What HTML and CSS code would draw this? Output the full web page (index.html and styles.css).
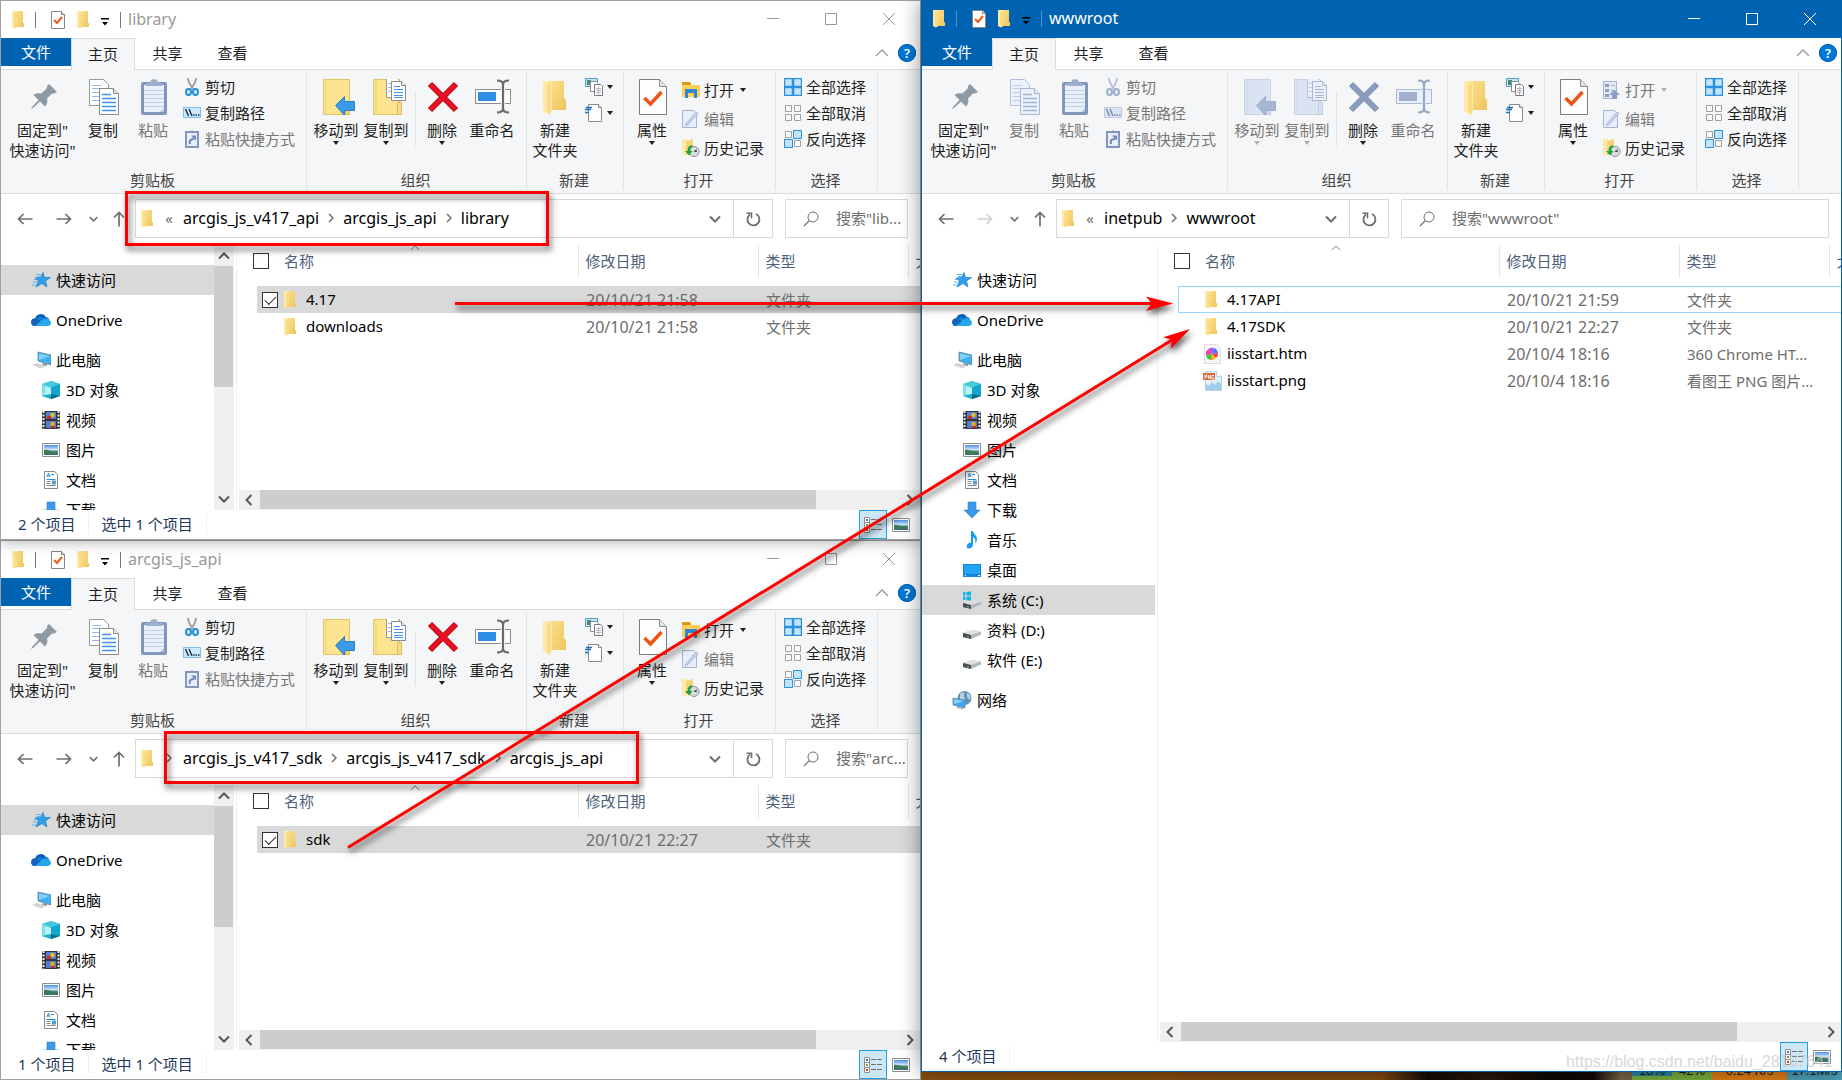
FILE: index.html
```html
<!DOCTYPE html>
<html lang="zh-CN">
<head>
<meta charset="utf-8">
<title>wwwroot</title>
<link rel="stylesheet" href="styles.css">
</head>
<body>
<svg class="sprite" aria-hidden="true">
  <defs>
    <filter id="disabled-tint" color-interpolation-filters="sRGB">
      <feColorMatrix type="matrix" values=".167 .329 .064 0 .358  .147 .288 .056 0 .454  .106 .207 .04 0 .633  0 0 0 1 0"/>
    </filter>
    <linearGradient id="g-folder" x1="0" y1="0" x2="1" y2="1"><stop offset="0" stop-color="#fbe08f"/><stop offset="1" stop-color="#efc55c"/></linearGradient>
    <linearGradient id="g-sky" x1="0" y1="0" x2="0" y2="1"><stop offset="0" stop-color="#4f8fe8"/><stop offset=".5" stop-color="#d5ecfb"/><stop offset=".6" stop-color="#4f8a72"/><stop offset="1" stop-color="#3a6a8c"/></linearGradient>
  </defs>

  <symbol id="folder" viewBox="0 0 20 20"><path d="M6 1h7v12h1v4H6z" fill="url(#g-folder)"/><path d="M2 1h4l1 1v15l-2 1.500-3-1.500z" fill="#ffe9a8"/><path d="M4 17V3l3-1v15l-2 1.500z" fill="#fbdc86"/></symbol>
  <symbol id="check-doc" viewBox="0 0 20 20"><path d="M3.500 1.500h10l3 3v14h-13z" fill="#fff" stroke="#858585"/><path d="M13.500 1.500v3h3" fill="#e4e4e4" stroke="#858585"/><path d="M6 10l3 3 5-6" fill="none" stroke="#f05a1a" stroke-width="2"/></symbol>
  <symbol id="qat-arrow" viewBox="0 0 8 8"><path class="qat-line" d="M0 0h8v1.500H0z" fill="currentColor"/><path d="M1 4h6L4 7.500z" fill="currentColor"/></symbol>
  <symbol id="caret" viewBox="0 0 8 4"><path d="M1 0h6L4 4z" fill="currentColor"/></symbol>
  <symbol id="min" viewBox="0 0 14 14"><path d="M1 6.500h12" stroke="currentColor"/></symbol>
  <symbol id="max" viewBox="0 0 14 14"><path d="M1.500 1.500h11v11h-11z" fill="none" stroke="currentColor"/></symbol>
  <symbol id="close" viewBox="0 0 14 14"><path d="M1 1l12 12M13 1L1 13" stroke="currentColor" fill="none"/></symbol>
  <symbol id="up-thin" viewBox="0 0 14 8"><path d="M1 7l6-6 6 6" fill="none" stroke="currentColor" stroke-width="1.300"/></symbol>
  <symbol id="chev-down" viewBox="0 0 12 8"><path d="M1 1.500l5 5 5-5" fill="none" stroke="currentColor" stroke-width="2"/></symbol>
  <symbol id="chev-up" viewBox="0 0 12 8"><path d="M1 6.500l5-5 5 5" fill="none" stroke="currentColor" stroke-width="2"/></symbol>
  <symbol id="chev-right" viewBox="0 0 8 12"><path d="M1.500 1l5 5-5 5" fill="none" stroke="currentColor" stroke-width="2"/></symbol>
  <symbol id="chev-left" viewBox="0 0 8 12"><path d="M6.500 1l-5 5 5 5" fill="none" stroke="currentColor" stroke-width="2"/></symbol>
  <symbol id="crumb" viewBox="0 0 6 10"><path d="M1 1l4 4-4 4" fill="none" stroke="currentColor" stroke-width="1.500"/></symbol>
  <symbol id="back" viewBox="0 0 16 12"><path d="M15.500 6H1.500M6.500 1l-5 5 5 5" fill="none" stroke="currentColor" stroke-width="1.700"/></symbol>
  <symbol id="forward" viewBox="0 0 16 12"><path d="M.5 6h14M9.500 1l5 5-5 5" fill="none" stroke="currentColor" stroke-width="1.700"/></symbol>
  <symbol id="up" viewBox="0 0 12 16"><path d="M6 15.500V1.500M1 6.500l5-5 5 5" fill="none" stroke="currentColor" stroke-width="1.700"/></symbol>
  <symbol id="refresh" viewBox="0 0 16 16"><path d="M5 3.500A6 6 0 1 0 11 3" fill="none" stroke="currentColor" stroke-width="1.800"/><path d="M1.500 2.200h5v5" fill="none" stroke="currentColor" stroke-width="1.600"/></symbol>
  <symbol id="search" viewBox="0 0 16 16"><circle cx="10" cy="6" r="5" fill="none" stroke="currentColor"/><path d="M6.500 9.500L.8 15.200" stroke="currentColor" stroke-width="1.200"/></symbol>

  <symbol id="pin" viewBox="0 0 40 36"><path d="M26 5l8 8-3 1.500h-2l-5 5c1 3 0 6-2 8l-5-5-7 6.500-2 1 1-2 6.500-7-5-5c2-2 5-2 8-1.500l5.500-5.500v-2z" fill="#8e9aa3"/></symbol>
  <symbol id="copy" viewBox="0 0 40 36"><path d="M6.500.5h14l5 5v21h-19z" fill="#fff" stroke="#9a9a9a"/><path d="M9 6.500h9M9 9.500h14M9 13.500h7M9 17.500h7M9 21.500h7" stroke="#8fb9f2"/><path d="M16.500 9.500h14l5 5v21h-19z" fill="#fff" stroke="#8a8a8a"/><path d="M30.500 9.500v5h5" fill="#e8e8e8" stroke="#8a8a8a"/><path d="M19 15.500h9M19 19.500h14M19 23.500h14M19 27.500h14M19 31.500h14" stroke="#3f94f5" stroke-width="1.500"/></symbol>
  <symbol id="paste" viewBox="0 0 40 36"><rect x="8" y="3" width="26" height="33" rx="2" fill="#8397bd"/><path d="M11 6h20v27H11z" fill="#eaf0fa"/><path d="M11 11.500h20M11 15.500h20M11 19.500h20M11 23.500h20M11 27.500h20" stroke="#c3d0e6"/><path d="M13 7V4h4l1-3c1-1 5-1 6 0l1 3h4v3z" fill="#9dafcf"/><path d="M27 33h4v-4z" fill="#b9c7e0"/></symbol>
  <symbol id="move-to" viewBox="0 0 40 36"><path d="M7.500.5h26v35h-26z" fill="#fde490" stroke="#e3c36a"/><path d="M10 1v34" stroke="#f0d07a"/><path d="M29.500 24h4v11.500h-4z" fill="#f7d375" stroke="#dfb95a"/><path d="M19.500 26.500l9-9v5h10v9h-10v5z" fill="#3c9be8" stroke="#2b80c8"/></symbol>
  <symbol id="copy-to" viewBox="0 0 40 36"><path d="M7.500.5h26v35h-26z" fill="#fde490" stroke="#e3c36a"/><path d="M10 1v34" stroke="#f0d07a"/><path d="M31.500 23.500h4v12h-4z" fill="#fbdc86" stroke="#dfb95a"/><path d="M20.500-1.500h10l4 4v16h-14z" fill="#fff" stroke="#9a9a9a"/><path d="M22 4.500h4M22 8.500h4M22 12.500h4" stroke="#8fb9f2"/><path d="M25.500 2.500h10l4 4v15h-14z" fill="#fff" stroke="#8a8a8a"/><path d="M35.500 2.500v4h4" fill="#eee" stroke="#8a8a8a"/><path d="M28 7.500h6M28 10.500h9M28 13.500h9M28 16.500h9M28 18.500h9" stroke="#3f94f5"/></symbol>
  <symbol id="delete" viewBox="0 0 40 36"><path d="M8 5l26 26M34 5L8 31" stroke="#b3000c" stroke-width="6"/><path d="M8.500 5.500l25 25M33.500 5.500l-25 25" stroke="#e81123" stroke-width="4.500"/></symbol>
  <symbol id="rename" viewBox="0 0 40 36"><path d="M3.500 10.500h35v14h-35z" fill="#fdfdfd" stroke="#8c8c8c"/><path d="M6 13h18v9H6z" fill="#2f8fe6"/><path d="M29 9h4v17h-4z" fill="#f5f6f7"/><path d="M25 1.500c4 0 6 1 6 4v24c0 3-2 4-6 4M37 1.500c-4 0-6 1-6 4v24c0 3 2 4 6 4" fill="none" stroke="#6b6b6b" stroke-width="2.200"/></symbol>
  <symbol id="new-folder" viewBox="0 0 40 36"><path d="M14 2h15v17l2 2v10H14z" fill="url(#g-folder)"/><path d="M8 2h6l3 3v27l-3 4-6-4z" fill="#ffe9a8"/><path d="M12 33V5l4-2v28l-1 5z" fill="#fbdc86"/></symbol>
  <symbol id="props" viewBox="0 0 40 36"><path d="M7.500.5h20l7 7v28h-27z" fill="#fdfdfd" stroke="#7d7d7d"/><path d="M27.500.5v7h7" fill="#e3e3e3" stroke="#8a8a8a"/><path d="M12.500 19l6 6 11-12" fill="none" stroke="#f05414" stroke-width="3.500"/></symbol>

  <symbol id="cut" viewBox="0 0 18 18"><path d="M5 0c0 4 2 7 5 11M13 0c0 4-2 7-5 11" fill="none" stroke="#9a9a9a" stroke-width="1.800"/><ellipse cx="5.500" cy="14" rx="2.500" ry="3" fill="none" stroke="#1e8fd8" stroke-width="2"/><ellipse cx="12.500" cy="14" rx="2.500" ry="3" fill="none" stroke="#1e8fd8" stroke-width="2"/></symbol>
  <symbol id="copy-path" viewBox="0 0 18 18"><path d="M.5 3.500h17v10H.5z" fill="#cdebfc" stroke="#7fbde8"/><path d="M2.500 5l3 7M6 5l3 7M10 11h1.500M12.500 11H14M15 11h1.500" stroke="#14304a" stroke-width="1.400"/></symbol>
  <symbol id="paste-link" viewBox="0 0 18 18"><path d="M3 2h12v15H3z" fill="#e8eefa" stroke="#8397bd" stroke-width="2"/><path d="M6 3V1h2l1-1 1 1h2v2z" fill="#8397bd"/><path d="M7 14c-1-3 0-5 4-5" fill="none" stroke="#6d85b3" stroke-width="2"/><path d="M8 5.500h5v5z" fill="#6d85b3"/></symbol>
  <symbol id="new-item" viewBox="0 0 18 18"><path d="M.5.500h12v8H.5z" fill="#c3e6f5" stroke="#5a9bc0"/><path d="M2 2h4v5H2z" fill="#4d8a78"/><path d="M5.500 3.500h6l2 2v8h-8z" fill="#fff" stroke="#8c8c8c"/><path d="M9.500 6.500h6l2 2v9h-8z" fill="#fff" stroke="#7a7a7a"/><path d="M11 10.500h5M11 12.500h5M11 14.500h5" stroke="#9db9e0"/><path d="M13.500 9v8" stroke="#e8a8a0"/></symbol>
  <symbol id="easy-access" viewBox="0 0 18 18"><path d="M3.500.5h10l3 3v14h-13z" fill="#fdfdfd" stroke="#8a8a8a"/><path d="M13.500.5v3h3" fill="#e8e8e8" stroke="#8a8a8a"/><path d="M1 3.500h6M0 5.500h6M-1 8.500h5" stroke="#1e6fb8" stroke-width="1.300"/></symbol>
  <symbol id="open" viewBox="0 0 18 18"><path d="M0 1h8l1 2v4H0z" fill="#d99a10"/><path d="M0 4h18v12H0z" fill="#fccf5a"/><path d="M3 17V8h12v9h-3v-5H6v5z" fill="#2f86d8"/></symbol>
  <symbol id="open-list" viewBox="0 0 18 18"><path d="M.5.500h13v17H.5z" fill="#e5ebf6" stroke="#a3b3d1"/><path d="M2 3h4v3H2zM2 8h4v3H2zM2 13h4v3H2z" fill="#8c9fc3"/><path d="M8 4.500h4M8 9.500h4" stroke="#a3b3d1"/><path d="M9 18v-4H6l5.500-5.500L17 14h-3v4z" fill="#8c9fc3"/></symbol>
  <symbol id="edit" viewBox="0 0 18 18"><path d="M.5.500h11l3 3v14H.5z" fill="#e8eefa" stroke="#a3b3d1"/><path d="M3 15L14 2l2 1.500L5 15.500z" fill="#cdd8ec" stroke="#a3b3d1"/></symbol>
  <symbol id="history" viewBox="0 0 18 18"><path d="M0 0h5v17H3l-3-2z" fill="#ffe9a8"/><path d="M4 2l7-2v15H4z" fill="#f7d375"/><circle cx="12" cy="12.500" r="5" fill="#d9dde0" stroke="#8b9297"/><path d="M12 12.500l3-2M12 12.500h3" stroke="#555"/><path d="M10 6c-4 1-5 4-4 6H3l4 4.500 3.500-4.500H8.500c-.5-2 0-3 1.500-4z" fill="#22a045"/></symbol>
  <symbol id="sel-all" viewBox="0 0 18 18"><path d="M.5.500h17v17H.5z" fill="#c2e4fb" stroke="#2b8fdd" stroke-width="1.400"/><path d="M9 0v18M0 9h18" stroke="#2b8fdd" stroke-width="2.500"/></symbol>
  <symbol id="sel-none" viewBox="0 0 18 18"><path d="M1.500 1.500h6v6h-6zM10.500 1.500h6v6h-6zM1.500 10.500h6v6h-6zM10.500 10.500h6v6h-6z" fill="#fafafa" stroke="#a0a0a0"/></symbol>
  <symbol id="sel-inv" viewBox="0 0 18 18"><path d="M1.500 1.500h6v6h-6zM10.500 10.500h6v6h-6z" fill="#fafafa" stroke="#a0a0a0"/><path d="M9.500.5h8v8h-8zM.5 9.500h8v8h-8z" fill="#c2e4fb" stroke="#2b8fdd"/></symbol>

  <symbol id="star" viewBox="0 0 20 20"><path d="M12 2.500l1.500 5 6 0-5 3.500 1.500 6-5-3.500-6 3.500 2.500-6L4 8l5.500-.5z" fill="#2f9fe8" stroke="#1a7fc8" stroke-width=".7"/><path d="M5 4.500h5M6 6.500h4M3 9.500h3M2 12h4M1 15h4" stroke="#5db9f0"/></symbol>
  <symbol id="onedrive" viewBox="0 0 20 20"><path d="M4 9a6 6 0 0 1 11-2l-3 5-10 4A4 4 0 0 1 4 9z" fill="#0a5cb8"/><path d="M12 8c3-2 6-1 6 2l-6 3-7-4c2-2 5-2 7-1z" fill="#1580d8"/><path d="M3 15.500C6 12 10 10 12 9.500c4-2 8 0 8 3.500 0 2-1.500 3-3.500 3h-12z" fill="#28a8ea"/><path d="M0 12c0-3 3-4.500 6-3.200L10 11l-6 5c-2 0-4-1.500-4-4z" fill="#1264c0"/></symbol>
  <symbol id="pc" viewBox="0 0 20 20"><path d="M7 2l13 3v10L7 11z" fill="#3fb0f0" stroke="#6b8296" stroke-width=".8"/><path d="M8 3.500l11 2.500-11 4z" fill="#7fd0fa"/><path d="M12 13l4 1v2l-5-1z" fill="#8a949c"/><path d="M1 15l5-2 9 3-5 2.500z" fill="#d0d5da"/></symbol>
  <symbol id="cube" viewBox="0 0 18 18"><path d="M0 3l9-3v18l-9-3z" fill="#7fe0ea"/><path d="M9 0l9 3v12l-9 3z" fill="#12a5cf"/><path d="M0 3l9-3 9 3-9 3.500z" fill="#45c8d8"/><path d="M3 5.500l6 1.500V14l-6-1z" fill="#b8f2f6"/><path d="M0 15l9-2 9 2-9 3z" fill="#1cb0c4"/><path d="M9 13l9 2-9 3z" fill="#0a6c84"/></symbol>
  <symbol id="video" viewBox="0 0 18 18"><path d="M0 0h18v18H0z" fill="#343434"/><path d="M1.500 0v18M16.500 0v18" stroke="#f0f0f0" stroke-width="2" stroke-dasharray="2 1.500"/><path d="M4 1h10v7H4zM4 10h10v7H4z" fill="#4f7fd8"/><circle cx="10.500" cy="4" r="2.300" fill="#e8c020"/><path d="M5 5h4v3H5z" fill="#c83020"/><circle cx="10.500" cy="13" r="2.300" fill="#e8a820"/><path d="M9 15h4v2H9z" fill="#c83020"/></symbol>
  <symbol id="picture" viewBox="0 0 18 18"><path d="M.5 2.500h17v13H.5z" fill="#fff" stroke="#8c8c8c"/><path d="M2 4h14v10H2z" fill="url(#g-sky)"/><path d="M2 9c4-1 8 2 14 3v1H2z" fill="#3f7a58"/></symbol>
  <symbol id="doc" viewBox="0 0 18 18"><path d="M2.500.5h10l3 3v14h-13z" fill="#fff" stroke="#8a8a8a"/><path d="M5 6l1.500-4L8 6M5.500 5h2M9 3.500h3M4.500 8.500h9" stroke="#2a8fd0" fill="none"/><path d="M10 9.500h4v4h-4z" fill="#4f9fd8"/><path d="M4.500 10.500h4M4.500 12.500h4M4.500 14.500h9" stroke="#8a8a8a"/></symbol>
  <symbol id="download" viewBox="0 0 18 18"><path d="M5 1h8v8h4l-8 8-8-8h4z" fill="#3c98e8" stroke="#2b7fc8" stroke-width=".6"/></symbol>
  <symbol id="music" viewBox="0 0 18 18"><path d="M8 0h2c0 3 4 4 4 8 0 2-1 4-2 4 1-3 0-5-2-6v7c0 3-2 4.500-4 4.500S3 16 4 14s3-2.500 4-2z" fill="#159bf0"/></symbol>
  <symbol id="desk" viewBox="0 0 18 18"><path d="M0 3h18v13H0z" fill="#1487dd"/><path d="M1 4h16v9H1z" fill="#25a3f5"/><path d="M2 14.500h1M15 14.500h2" stroke="#fff"/></symbol>
  <symbol id="drive" viewBox="0 0 18 18"><path d="M0 12l9-3 9 1.500v3L8 18l-8-2z" fill="#b5b8bb"/><path d="M0 12l9-3 9 1.500L8 14z" fill="#dfe1e3"/><path d="M0 12l8 2v4l-8-2z" fill="#4a4d50"/><path d="M4 15.500l2 .5" stroke="#6fd06f"/></symbol>
  <symbol id="drive-c" viewBox="0 0 18 18"><use href="#drive"/><path d="M-1 1.500L2.500 1v3.500H-1zM3.500 1L8 .2v4.300H3.500zM-1 5.500h3.500V9L-1 8.500zM3.500 5.500H8v4.300L3.500 9z" fill="#10b4e8"/></symbol>
  <symbol id="network" viewBox="0 0 20 20"><circle cx="12.500" cy="8" r="7" fill="#5f94b8"/><path d="M8 4c3-3 5-1 4 1s2 3 1 5-5 1-5-1zM15 3c3 1 4 4 3 7l-3-3z" fill="#b5d4e4"/><path d="M1 8l12 2v8L1 15z" fill="#3fa8ef" stroke="#5a7f9c" stroke-width=".7"/><path d="M2 9l10 2-10 3z" fill="#85d0fa"/><path d="M5 17l6 1v1l-6-1z" fill="#8a949c"/></symbol>
  <symbol id="htm" viewBox="0 0 20 20"><path d="M1.500.5h12l4 4v15h-16z" fill="#f6f6f6" stroke="#dcdcdc"/><path d="M9 10L5.500 5A6 6 0 0 1 11 4z" fill="#b34ff0"/><path d="M9 10l2-6a6 6 0 0 1 4 5z" fill="#4f74f5"/><path d="M9 10l6-1a6 6 0 0 1-2 5z" fill="#ff3b3b"/><path d="M9 10l4 4a6 6 0 0 1-5 2z" fill="#ffb01a"/><path d="M9 10l-1 6a6 6 0 0 1-5-5z" fill="#35c63b"/><path d="M9 10l-6 1a6 6 0 0 1 2.500-6z" fill="#e83fa8"/></symbol>
  <symbol id="png" viewBox="0 0 20 20"><path d="M2.500.5h11l5 5v14h-16z" fill="#dff0fa" stroke="#b5d3e6"/><path d="M13.500.5v5h5" fill="#fff" stroke="#b5d3e6"/><path d="M3 19v-6l3 2 3-4 3 3 3-4 3 3v6z" fill="#9fcdea"/><path d="M0 2h12v7H0z" fill="#e0653a"/><path d="M2 8V4h2v2H2M5.500 8V4l2 4V4M11 4.500H9V8h2V6.500" stroke="#fff" fill="none" stroke-width=".8"/></symbol>
  <symbol id="view-list" viewBox="0 0 18 18"><path d="M.5 1.500h5v15h-5zM.5 6.500h5M.5 11.500h5" fill="#fff" stroke="#8c8c8c"/><path d="M2 3h2v2H2z" fill="#3f7fa0"/><path d="M2 8h2v2H2z" fill="#8a9a3f"/><path d="M2 13h2v2H2z" fill="#c84020"/><path d="M7 3.500h5M13 3.500h5M7 8.500h5M13 8.500h5M7 13.500h5M13 13.500h5" stroke="#6f6f6f"/></symbol>
</svg>

<main class="desktop">

  <section class="window window-a">
    <header class="titlebar">
      <svg class="i20"><use href="#folder"/></svg><span class="bar"></span>
      <svg class="i20 qat-doc"><use href="#check-doc"/></svg><svg class="i20 qat-folder"><use href="#folder"/></svg><svg class="qat"><use href="#qat-arrow"/></svg><span class="bar"></span>
      <h1>library</h1>
      <div class="controls"><button aria-label="最小化"><svg><use href="#min"/></svg></button><button aria-label="最大化"><svg><use href="#max"/></svg></button><button aria-label="关闭"><svg><use href="#close"/></svg></button></div>
    </header>
    <nav class="tabs"><button class="tab file">文件</button><button class="tab active">主页</button><button class="tab">共享</button><button class="tab">查看</button><span class="tab-tools"><svg class="thin"><use href="#up-thin"/></svg><button class="help" aria-label="帮助">?</button></span></nav>
    <div class="ribbon">
      <div class="group g-clip"><div class="tools">
        <button class="big pin"><svg><use href="#pin"/></svg><span>固定到"<br>快速访问"</span></button>
        <button class="big"><svg><use href="#copy"/></svg><span>复制</span></button>
        <button class="big" disabled><svg class="plain"><use href="#paste"/></svg><span>粘贴</span></button>
        <div class="stack"><button class="small"><svg><use href="#cut"/></svg>剪切</button><button class="small"><svg><use href="#copy-path"/></svg>复制路径</button><button class="small" disabled><svg class="plain"><use href="#paste-link"/></svg>粘贴快捷方式</button></div>
      </div><div class="caption">剪贴板</div></div>
      <div class="group g-org"><div class="tools">
        <button class="big"><svg><use href="#move-to"/></svg><span>移动到</span><svg class="caret"><use href="#caret"/></svg></button>
        <button class="big"><svg><use href="#copy-to"/></svg><span>复制到</span><svg class="caret"><use href="#caret"/></svg></button>
        <span class="split"></span>
        <button class="big"><svg><use href="#delete"/></svg><span>删除</span><svg class="caret"><use href="#caret"/></svg></button>
        <button class="big"><svg><use href="#rename"/></svg><span>重命名</span></button>
      </div><div class="caption">组织</div></div>
      <div class="group g-new"><div class="tools">
        <button class="big"><svg><use href="#new-folder"/></svg><span>新建<br>文件夹</span></button>
        <div class="stack"><button class="small" aria-label="新建项目"><svg><use href="#new-item"/></svg><svg class="caret"><use href="#caret"/></svg></button><button class="small" aria-label="轻松访问"><svg><use href="#easy-access"/></svg><svg class="caret"><use href="#caret"/></svg></button></div>
      </div><div class="caption">新建</div></div>
      <div class="group g-open"><div class="tools">
        <button class="big"><svg><use href="#props"/></svg><span>属性</span><svg class="caret"><use href="#caret"/></svg></button>
        <div class="stack loose"><button class="small"><svg><use href="#open"/></svg>打开<svg class="caret"><use href="#caret"/></svg></button><button class="small" disabled><svg class="plain"><use href="#edit"/></svg>编辑</button><button class="small"><svg><use href="#history"/></svg>历史记录</button></div>
      </div><div class="caption">打开</div></div>
      <div class="group g-sel"><div class="tools">
        <div class="stack"><button class="small"><svg><use href="#sel-all"/></svg>全部选择</button><button class="small"><svg><use href="#sel-none"/></svg>全部取消</button><button class="small"><svg><use href="#sel-inv"/></svg>反向选择</button></div>
      </div><div class="caption">选择</div></div>
    </div>
    <div class="address-row">
      <button class="nb wide" aria-label="后退"><svg class="arrow-h"><use href="#back"/></svg></button><button class="nb wide" aria-label="前进"><svg class="arrow-h"><use href="#forward"/></svg></button><button class="nb recent" aria-label="最近"><svg class="chev-s"><use href="#chev-down"/></svg></button><button class="nb up" aria-label="向上"><svg class="arrow-v"><use href="#up"/></svg></button>
      <div class="address"><svg class="i20"><use href="#folder"/></svg><span class="lead">«</span><a href="#">arcgis_js_v417_api</a><span class="sep"><svg><use href="#crumb"/></svg></span><a href="#">arcgis_js_api</a><span class="sep"><svg><use href="#crumb"/></svg></span><a href="#">library</a><button class="drop" aria-label="历史"><svg class="chev"><use href="#chev-down"/></svg></button><button class="refresh" aria-label="刷新"><svg class="i16"><use href="#refresh"/></svg></button></div>
      <label class="search"><svg class="i16"><use href="#search"/></svg><input type="text" aria-label="搜索" placeholder='搜索"lib...'></label>
    </div>
    <div class="body">
      <aside class="tree"><ul>
        <li class="on"><a href="#"><svg class="i20"><use href="#star"/></svg>快速访问</a></li>
        <li class="top"><a href="#"><svg class="i20"><use href="#onedrive"/></svg>OneDrive</a></li>
        <li class="top"><a href="#"><svg class="i20"><use href="#pc"/></svg>此电脑</a></li>
        <li class="sub"><a href="#"><svg class="i18"><use href="#cube"/></svg>3D 对象</a></li>
        <li class="sub"><a href="#"><svg class="i18"><use href="#video"/></svg>视频</a></li>
        <li class="sub"><a href="#"><svg class="i18"><use href="#picture"/></svg>图片</a></li>
        <li class="sub"><a href="#"><svg class="i18"><use href="#doc"/></svg>文档</a></li>
        <li class="sub"><a href="#"><svg class="i18"><use href="#download"/></svg>下载</a></li>
      </ul></aside>
      <div class="vscroll"><svg class="chev"><use href="#chev-up"/></svg><span class="vthumb"></span><svg class="chev"><use href="#chev-down"/></svg></div>
      <div class="pane">
        <svg class="sort"><use href="#up-thin"/></svg>
        <table>
          <colgroup><col class="c-check"><col><col class="c-date"><col class="c-type"><col class="c-size"></colgroup>
          <thead><tr><th><input type="checkbox" aria-label="全选"></th><th class="h-name">名称</th><th>修改日期</th><th>类型</th><th>大小</th></tr></thead>
          <tbody>
            <tr class="selected"><td><input type="checkbox" aria-label="4.17" checked></td><td class="name"><svg class="i20"><use href="#folder"/></svg>4.17</td><td class="date">20/10/21 21:58</td><td>文件夹</td><td></td></tr>
            <tr><td></td><td class="name"><svg class="i20"><use href="#folder"/></svg>downloads</td><td class="date">20/10/21 21:58</td><td>文件夹</td><td></td></tr>
          </tbody>
        </table>
        <div class="hscroll"><svg class="chev-v"><use href="#chev-left"/></svg><span class="track"><span class="hthumb"></span></span><svg class="chev-v"><use href="#chev-right"/></svg></div>
      </div>
    </div>
    <footer class="status"><span>2 个项目</span><span>选中 1 个项目</span><div class="views"><button class="on" aria-label="详细信息"><svg class="i18"><use href="#view-list"/></svg></button><button aria-label="大图标"><svg class="i18"><use href="#picture"/></svg></button></div></footer>
  </section>

  <section class="window window-b">
    <header class="titlebar">
      <svg class="i20"><use href="#folder"/></svg><span class="bar"></span>
      <svg class="i20 qat-doc"><use href="#check-doc"/></svg><svg class="i20 qat-folder"><use href="#folder"/></svg><svg class="qat"><use href="#qat-arrow"/></svg><span class="bar"></span>
      <h1>arcgis_js_api</h1>
      <div class="controls"><button aria-label="最小化"><svg><use href="#min"/></svg></button><button aria-label="最大化"><svg><use href="#max"/></svg></button><button aria-label="关闭"><svg><use href="#close"/></svg></button></div>
    </header>
    <nav class="tabs"><button class="tab file">文件</button><button class="tab active">主页</button><button class="tab">共享</button><button class="tab">查看</button><span class="tab-tools"><svg class="thin"><use href="#up-thin"/></svg><button class="help" aria-label="帮助">?</button></span></nav>
    <div class="ribbon">
      <div class="group g-clip"><div class="tools">
        <button class="big pin"><svg><use href="#pin"/></svg><span>固定到"<br>快速访问"</span></button>
        <button class="big"><svg><use href="#copy"/></svg><span>复制</span></button>
        <button class="big" disabled><svg class="plain"><use href="#paste"/></svg><span>粘贴</span></button>
        <div class="stack"><button class="small"><svg><use href="#cut"/></svg>剪切</button><button class="small"><svg><use href="#copy-path"/></svg>复制路径</button><button class="small" disabled><svg class="plain"><use href="#paste-link"/></svg>粘贴快捷方式</button></div>
      </div><div class="caption">剪贴板</div></div>
      <div class="group g-org"><div class="tools">
        <button class="big"><svg><use href="#move-to"/></svg><span>移动到</span><svg class="caret"><use href="#caret"/></svg></button>
        <button class="big"><svg><use href="#copy-to"/></svg><span>复制到</span><svg class="caret"><use href="#caret"/></svg></button>
        <span class="split"></span>
        <button class="big"><svg><use href="#delete"/></svg><span>删除</span><svg class="caret"><use href="#caret"/></svg></button>
        <button class="big"><svg><use href="#rename"/></svg><span>重命名</span></button>
      </div><div class="caption">组织</div></div>
      <div class="group g-new"><div class="tools">
        <button class="big"><svg><use href="#new-folder"/></svg><span>新建<br>文件夹</span></button>
        <div class="stack"><button class="small" aria-label="新建项目"><svg><use href="#new-item"/></svg><svg class="caret"><use href="#caret"/></svg></button><button class="small" aria-label="轻松访问"><svg><use href="#easy-access"/></svg><svg class="caret"><use href="#caret"/></svg></button></div>
      </div><div class="caption">新建</div></div>
      <div class="group g-open"><div class="tools">
        <button class="big"><svg><use href="#props"/></svg><span>属性</span><svg class="caret"><use href="#caret"/></svg></button>
        <div class="stack loose"><button class="small"><svg><use href="#open"/></svg>打开<svg class="caret"><use href="#caret"/></svg></button><button class="small" disabled><svg class="plain"><use href="#edit"/></svg>编辑</button><button class="small"><svg><use href="#history"/></svg>历史记录</button></div>
      </div><div class="caption">打开</div></div>
      <div class="group g-sel"><div class="tools">
        <div class="stack"><button class="small"><svg><use href="#sel-all"/></svg>全部选择</button><button class="small"><svg><use href="#sel-none"/></svg>全部取消</button><button class="small"><svg><use href="#sel-inv"/></svg>反向选择</button></div>
      </div><div class="caption">选择</div></div>
    </div>
    <div class="address-row">
      <button class="nb wide" aria-label="后退"><svg class="arrow-h"><use href="#back"/></svg></button><button class="nb wide" aria-label="前进"><svg class="arrow-h"><use href="#forward"/></svg></button><button class="nb recent" aria-label="最近"><svg class="chev-s"><use href="#chev-down"/></svg></button><button class="nb up" aria-label="向上"><svg class="arrow-v"><use href="#up"/></svg></button>
      <div class="address"><svg class="i20"><use href="#folder"/></svg><span class="lead"><svg><use href="#crumb"/></svg></span><a href="#">arcgis_js_v417_sdk</a><span class="sep"><svg><use href="#crumb"/></svg></span><a href="#">arcgis_js_v417_sdk</a><span class="sep"><svg><use href="#crumb"/></svg></span><a href="#">arcgis_js_api</a><button class="drop" aria-label="历史"><svg class="chev"><use href="#chev-down"/></svg></button><button class="refresh" aria-label="刷新"><svg class="i16"><use href="#refresh"/></svg></button></div>
      <label class="search"><svg class="i16"><use href="#search"/></svg><input type="text" aria-label="搜索" placeholder='搜索"arc...'></label>
    </div>
    <div class="body">
      <aside class="tree"><ul>
        <li class="on"><a href="#"><svg class="i20"><use href="#star"/></svg>快速访问</a></li>
        <li class="top"><a href="#"><svg class="i20"><use href="#onedrive"/></svg>OneDrive</a></li>
        <li class="top"><a href="#"><svg class="i20"><use href="#pc"/></svg>此电脑</a></li>
        <li class="sub"><a href="#"><svg class="i18"><use href="#cube"/></svg>3D 对象</a></li>
        <li class="sub"><a href="#"><svg class="i18"><use href="#video"/></svg>视频</a></li>
        <li class="sub"><a href="#"><svg class="i18"><use href="#picture"/></svg>图片</a></li>
        <li class="sub"><a href="#"><svg class="i18"><use href="#doc"/></svg>文档</a></li>
        <li class="sub"><a href="#"><svg class="i18"><use href="#download"/></svg>下载</a></li>
      </ul></aside>
      <div class="vscroll"><svg class="chev"><use href="#chev-up"/></svg><span class="vthumb"></span><svg class="chev"><use href="#chev-down"/></svg></div>
      <div class="pane">
        <svg class="sort"><use href="#up-thin"/></svg>
        <table>
          <colgroup><col class="c-check"><col><col class="c-date"><col class="c-type"><col class="c-size"></colgroup>
          <thead><tr><th><input type="checkbox" aria-label="全选"></th><th class="h-name">名称</th><th>修改日期</th><th>类型</th><th>大小</th></tr></thead>
          <tbody>
            <tr class="selected"><td><input type="checkbox" aria-label="sdk" checked></td><td class="name"><svg class="i20"><use href="#folder"/></svg>sdk</td><td class="date">20/10/21 22:27</td><td>文件夹</td><td></td></tr>
          </tbody>
        </table>
        <div class="hscroll"><svg class="chev-v"><use href="#chev-left"/></svg><span class="track"><span class="hthumb"></span></span><svg class="chev-v"><use href="#chev-right"/></svg></div>
      </div>
    </div>
    <footer class="status"><span>1 个项目</span><span>选中 1 个项目</span><div class="views"><button class="on" aria-label="详细信息"><svg class="i18"><use href="#view-list"/></svg></button><button aria-label="大图标"><svg class="i18"><use href="#picture"/></svg></button></div></footer>
  </section>

  <section class="window window-c">
    <header class="titlebar">
      <svg class="i20"><use href="#folder"/></svg><span class="bar"></span>
      <svg class="i20 qat-doc"><use href="#check-doc"/></svg><svg class="i20 qat-folder"><use href="#folder"/></svg><svg class="qat"><use href="#qat-arrow"/></svg><span class="bar"></span>
      <h1>wwwroot</h1>
      <div class="controls"><button aria-label="最小化"><svg><use href="#min"/></svg></button><button aria-label="最大化"><svg><use href="#max"/></svg></button><button aria-label="关闭"><svg><use href="#close"/></svg></button></div>
    </header>
    <nav class="tabs"><button class="tab file">文件</button><button class="tab active">主页</button><button class="tab">共享</button><button class="tab">查看</button><span class="tab-tools"><svg class="thin"><use href="#up-thin"/></svg><button class="help" aria-label="帮助">?</button></span></nav>
    <div class="ribbon">
      <div class="group g-clip"><div class="tools">
        <button class="big pin"><svg><use href="#pin"/></svg><span>固定到"<br>快速访问"</span></button>
        <button class="big" disabled><svg><use href="#copy"/></svg><span>复制</span></button>
        <button class="big" disabled><svg class="plain"><use href="#paste"/></svg><span>粘贴</span></button>
        <div class="stack"><button class="small" disabled><svg><use href="#cut"/></svg>剪切</button><button class="small" disabled><svg><use href="#copy-path"/></svg>复制路径</button><button class="small" disabled><svg class="plain"><use href="#paste-link"/></svg>粘贴快捷方式</button></div>
      </div><div class="caption">剪贴板</div></div>
      <div class="group g-org"><div class="tools">
        <button class="big" disabled><svg><use href="#move-to"/></svg><span>移动到</span><svg class="caret"><use href="#caret"/></svg></button>
        <button class="big" disabled><svg><use href="#copy-to"/></svg><span>复制到</span><svg class="caret"><use href="#caret"/></svg></button>
        <span class="split"></span>
        <button class="big"><svg class="dim"><use href="#delete"/></svg><span>删除</span><svg class="caret"><use href="#caret"/></svg></button>
        <button class="big" disabled><svg><use href="#rename"/></svg><span>重命名</span></button>
      </div><div class="caption">组织</div></div>
      <div class="group g-new"><div class="tools">
        <button class="big"><svg><use href="#new-folder"/></svg><span>新建<br>文件夹</span></button>
        <div class="stack"><button class="small" aria-label="新建项目"><svg><use href="#new-item"/></svg><svg class="caret"><use href="#caret"/></svg></button><button class="small" aria-label="轻松访问"><svg><use href="#easy-access"/></svg><svg class="caret"><use href="#caret"/></svg></button></div>
      </div><div class="caption">新建</div></div>
      <div class="group g-open"><div class="tools">
        <button class="big"><svg><use href="#props"/></svg><span>属性</span><svg class="caret"><use href="#caret"/></svg></button>
        <div class="stack loose"><button class="small" disabled><svg class="plain"><use href="#open-list"/></svg>打开<svg class="caret"><use href="#caret"/></svg></button><button class="small" disabled><svg class="plain"><use href="#edit"/></svg>编辑</button><button class="small"><svg><use href="#history"/></svg>历史记录</button></div>
      </div><div class="caption">打开</div></div>
      <div class="group g-sel"><div class="tools">
        <div class="stack"><button class="small"><svg><use href="#sel-all"/></svg>全部选择</button><button class="small"><svg><use href="#sel-none"/></svg>全部取消</button><button class="small"><svg><use href="#sel-inv"/></svg>反向选择</button></div>
      </div><div class="caption">选择</div></div>
    </div>
    <div class="address-row">
      <button class="nb wide" aria-label="后退"><svg class="arrow-h"><use href="#back"/></svg></button><button class="nb wide" aria-label="前进" disabled><svg class="arrow-h"><use href="#forward"/></svg></button><button class="nb recent" aria-label="最近"><svg class="chev-s"><use href="#chev-down"/></svg></button><button class="nb up" aria-label="向上"><svg class="arrow-v"><use href="#up"/></svg></button>
      <div class="address"><svg class="i20"><use href="#folder"/></svg><span class="lead">«</span><a href="#">inetpub</a><span class="sep"><svg><use href="#crumb"/></svg></span><a href="#">wwwroot</a><button class="drop" aria-label="历史"><svg class="chev"><use href="#chev-down"/></svg></button><button class="refresh" aria-label="刷新"><svg class="i16"><use href="#refresh"/></svg></button></div>
      <label class="search"><svg class="i16"><use href="#search"/></svg><input type="text" aria-label="搜索" placeholder='搜索"wwwroot"'></label>
    </div>
    <div class="body">
      <aside class="tree"><ul>
        <li><a href="#"><svg class="i20"><use href="#star"/></svg>快速访问</a></li>
        <li class="top"><a href="#"><svg class="i20"><use href="#onedrive"/></svg>OneDrive</a></li>
        <li class="top"><a href="#"><svg class="i20"><use href="#pc"/></svg>此电脑</a></li>
        <li class="sub"><a href="#"><svg class="i18"><use href="#cube"/></svg>3D 对象</a></li>
        <li class="sub"><a href="#"><svg class="i18"><use href="#video"/></svg>视频</a></li>
        <li class="sub"><a href="#"><svg class="i18"><use href="#picture"/></svg>图片</a></li>
        <li class="sub"><a href="#"><svg class="i18"><use href="#doc"/></svg>文档</a></li>
        <li class="sub"><a href="#"><svg class="i18"><use href="#download"/></svg>下载</a></li>
        <li class="sub"><a href="#"><svg class="i18"><use href="#music"/></svg>音乐</a></li>
        <li class="sub"><a href="#"><svg class="i18"><use href="#desk"/></svg>桌面</a></li>
        <li class="sub on"><a href="#"><svg class="i18"><use href="#drive-c"/></svg>系统 (C:)</a></li>
        <li class="sub"><a href="#"><svg class="i18"><use href="#drive"/></svg>资料 (D:)</a></li>
        <li class="sub"><a href="#"><svg class="i18"><use href="#drive"/></svg>软件 (E:)</a></li>
        <li class="top"><a href="#"><svg class="i20"><use href="#network"/></svg>网络</a></li>
      </ul></aside>
      <div class="pane">
        <svg class="sort"><use href="#up-thin"/></svg>
        <table>
          <colgroup><col class="c-check"><col><col class="c-date"><col class="c-type"><col class="c-size"></colgroup>
          <thead><tr><th><input type="checkbox" aria-label="全选"></th><th class="h-name">名称</th><th>修改日期</th><th>类型</th><th>大小</th></tr></thead>
          <tbody>
            <tr class="focused"><td></td><td class="name"><svg class="i20"><use href="#folder"/></svg>4.17API</td><td class="date">20/10/21 21:59</td><td>文件夹</td><td></td></tr>
            <tr><td></td><td class="name"><svg class="i20"><use href="#folder"/></svg>4.17SDK</td><td class="date">20/10/21 22:27</td><td>文件夹</td><td></td></tr>
            <tr><td></td><td class="name"><svg class="i20"><use href="#htm"/></svg>iisstart.htm</td><td class="date">20/10/4 18:16</td><td>360 Chrome HT...</td><td></td></tr>
            <tr><td></td><td class="name"><svg class="i20"><use href="#png"/></svg>iisstart.png</td><td class="date">20/10/4 18:16</td><td>看图王 PNG 图片...</td><td></td></tr>
          </tbody>
        </table>
        <div class="hscroll"><svg class="chev-v"><use href="#chev-left"/></svg><span class="track"><span class="hthumb"></span></span><svg class="chev-v"><use href="#chev-right"/></svg></div>
      </div>
    </div>
    <footer class="status"><span>4 个项目</span><div class="views"><button class="on" aria-label="详细信息"><svg class="i18"><use href="#view-list"/></svg></button><button aria-label="大图标"><svg class="i18"><use href="#picture"/></svg></button></div></footer>
  </section>

  <div class="meters"><span class="m-cpu">18%</span><span class="m-mem">42%</span><span class="m-up">0.24 K/s</span><span class="m-down">17.1M/s</span></div>

  <svg class="marks" aria-hidden="true">
    <g class="ink">
      <rect x="126.500" y="192.500" width="421" height="52"/>
      <rect x="165.500" y="732.500" width="472" height="50"/>
      <path d="M455 303.500H1154"/>
      <path d="M348 847.500L1172 340"/>
    </g>
    <g class="heads">
      <path d="M1173 303.500L1146 296.500L1152 303.500L1146 311z"/>
      <path d="M0 0L-27 -7L-21 0L-27 7z" transform="translate(1190 329) rotate(-31.600)"/>
    </g>
  </svg>
  <p class="watermark">https://blog.csdn.net/baidu_28157641</p>
</main>
</body>
</html>
```
FILE: styles.css
```css
* { box-sizing: border-box; }

body {
  margin: 0;
  font: 15px/20px "Noto Sans", "Noto Sans CJK SC", sans-serif;
  color: #000;
}

button, input {
  font: inherit;
  color: inherit;
  margin: 0;
  padding: 0;
  border: 0;
  background: none;
}

a { color: inherit; text-decoration: none; }
svg { display: block; flex: none; overflow: visible; }
.sprite { position: absolute; width: 0; height: 0; }

.i16 { width: 16px; height: 16px; }
.i18 { width: 18px; height: 18px; }
.i20 { width: 20px; height: 20px; }

/* Desktop */
.desktop {
  position: relative;
  display: grid;
  grid-template-columns: 1fr 1fr;
  grid-template-rows: 50vh minmax(0, 1fr) 8px;
  height: 100vh;
  overflow: hidden;
  background: #4a2f14;
}

.window {
  position: relative;
  display: flex;
  flex-direction: column;
  min-width: 0;
  background: #fff;
  border: 1px solid #a0a0a0;
}
.window-a { grid-area: 1 / 1; z-index: 2; box-shadow: 0 2px 14px rgba(0, 0, 0, .3); }
.window-b { grid-area: 2 / 1 / 4 / 2; z-index: 1; }
.window-c { grid-area: 1 / 2 / 3 / 3; z-index: 3; border-color: #0063b1; border-top: 0; box-shadow: 0 0 20px rgba(0, 0, 0, .45); }

/* Title bar */
.titlebar {
  display: flex;
  align-items: center;
  height: 37px;
  flex: none;
  padding-left: 9px;
  color: #999;
}
.titlebar .bar { width: 1px; height: 16px; margin-left: 5px; background: #777; }
.titlebar .qat-doc { margin-left: 12px; }
.titlebar .qat-folder { margin-left: 7px; }
.titlebar .qat { width: 8px; height: 8px; margin: 4px 6px 0 6px; color: #000; }
.titlebar h1 { flex: 1; margin: 0 0 0 7px; padding-bottom: 2px; font-size: 16px; font-weight: 400; }
.controls { display: flex; padding: 0 2px 1px 0; }
.controls button { width: 58px; height: 36px; display: grid; place-items: center; }
.controls svg { width: 14px; height: 14px; }
.window-c .titlebar { height: 38px; background: #0063b1; color: #fff; }
.window-c .bar { background: #4f93cc; }
.window-c .qat .qat-line { fill: #fff; }

/* Tabs */
.tabs { display: flex; height: 32px; flex: none; border-bottom: 1px solid #dadbdc; }
.tab { width: 65px; height: 31px; padding-bottom: 2px; color: #1e1e1e; }
.tab.file { width: 70px; height: 28px; padding: 0; background: #0063b1; color: #fff; }
.tab.active { width: 64px; height: 32px; background: #f5f6f7; border: 1px solid #dadbdc; border-bottom: 0; }
.tab-tools { display: flex; align-items: center; gap: 9px; margin-left: auto; padding: 0 4px 1px 0; color: #999; }
.thin { width: 14px; height: 8px; }
.help { width: 18px; height: 18px; border-radius: 50%; background: #0078d7; color: #fff; font-weight: 600; font-size: 13px; line-height: 18px; box-shadow: inset 0 0 0 1px #0060b0; }

/* Ribbon */
.ribbon { display: flex; flex: none; height: 124px; padding: 2px 0 3px; background: #f5f6f7; border-bottom: 1px solid #dadbdc; overflow: hidden; }
.group { display: flex; flex-direction: column; justify-content: space-between; flex: none; border-right: 1px solid #e2e3e4; }
.g-clip { width: 306px; }
.g-org { width: 220px; }
.g-new { width: 97px; }
.g-open { width: 152px; }
.g-sel { width: 102px; }
.tools { display: flex; align-items: flex-start; }
.g-clip .tools { padding-left: 6px; }
.g-org .tools { padding-left: 4px; }
.g-new .tools, .g-open .tools, .g-sel .tools { padding-left: 3px; }
.caption { padding-right: 2px; text-align: center; color: #444; line-height: 20px; }
.split { width: 1px; height: 55px; margin: 19px 1px 0 4px; background: #e2e3e4; }

.big { display: flex; flex-direction: column; align-items: center; gap: 5px; width: 50px; padding-top: 7px; color: #1e1e1e; white-space: nowrap; }
.big.pin { width: 71px; }
.big svg { width: 40px; height: 36px; }
.big .caret { width: 8px; height: 4px; margin-top: -4px; }
.stack { display: flex; flex-direction: column; margin: 2px 0 0 5px; }
.stack.loose { margin-top: 3px; }
.small { display: flex; align-items: center; gap: 4px; height: 26px; color: #1e1e1e; white-space: nowrap; }
.g-new .small { gap: 3px; }
.loose .small { height: 29px; }
.small svg { width: 18px; height: 18px; }
.small .caret { width: 8px; height: 4px; }
.loose .caret { margin-left: 1px; }
.big:disabled, .small:disabled { color: #767676; }
button:disabled svg, .dim { filter: url(#disabled-tint); }
button:disabled .plain, .nb:disabled svg, button:disabled .caret { filter: none; }
button:disabled .caret { color: #b0b0b0; }

/* Address row */
.address-row { display: flex; align-items: center; flex: none; height: 51px; padding: 0 12px 2px 4px; color: #6e6e6e; }
.nb { display: grid; place-items: center; height: 39px; }
.nb.wide { width: 39px; }
.nb.recent { width: 21px; }
.nb.up { width: 30px; margin-right: 1px; }
.nb:disabled { color: #d0d0d0; }
.arrow-h { width: 16px; height: 12px; }
.arrow-v { width: 12px; height: 16px; }
.chev { width: 12px; height: 8px; }
.chev-s { width: 9px; height: 6px; }
.chev-v { width: 8px; height: 12px; }
.address { display: flex; align-items: center; flex: 1; min-width: 0; height: 39px; padding-left: 3px; border: 1px solid #d9d9d9; background: #fff; }
.address a { padding-bottom: 2px; font-size: 16px; color: #000; }
.address .lead { display: flex; justify-content: center; align-items: center; width: 24px; padding: 0 4px 2px 0; }
.sep { display: flex; justify-content: center; width: 24px; padding-bottom: 2px; }
.sep svg, .lead svg { width: 6px; height: 10px; }
.drop { display: grid; place-items: center; width: 36px; height: 37px; margin-left: auto; }
.refresh { display: grid; place-items: center; width: 39px; height: 37px; border-left: 1px solid #d9d9d9; }
.search { display: flex; align-items: center; width: 123px; height: 39px; margin-left: 12px; padding-left: 17px; gap: 17px; border: 1px solid #d9d9d9; }
.search input { flex: 1; min-width: 0; padding-bottom: 2px; outline: 0; }
.search input::placeholder { color: #6e6e6e; opacity: 1; }
.window-c .search { width: 428px; }

/* Body */
.body { display: flex; flex: 1; min-height: 0; }
.tree { width: 213px; flex: none; overflow: hidden; }
.tree ul { list-style: none; margin: 0; padding: 20px 0 0; }
.tree a { display: flex; align-items: center; gap: 5px; height: 30px; padding-left: 30px; }
.tree .sub a { gap: 6px; padding-left: 41px; }
.tree .top { margin-top: 10px; }
.tree .on { background: #d9d9d9; }
.window-c .tree { width: 233px; margin-right: 2px; }
.vscroll { display: flex; flex-direction: column; align-items: center; flex: none; width: 20px; margin-right: 2px; padding: 7px 1px 7px 0; background: #f0f0f0; color: #555; }
.vthumb { width: 19px; height: 121px; margin-top: 6px; margin-bottom: auto; background: #cdcdcd; }

.pane { position: relative; display: flex; flex-direction: column; flex: 1; min-width: 0; border-left: 1px solid #f0f0f0; overflow: hidden; }
.sort { position: absolute; left: 173px; top: 0; width: 10px; height: 6px; color: #777; }
table { width: 100%; table-layout: fixed; border-collapse: collapse; }
.c-check { width: 45px; }
.c-date { width: 180px; }
.c-type { width: 150px; }
.c-size { width: 12px; }
th { height: 33px; padding: 0 0 2px 7px; border-left: 1px solid #e5e5e5; font-weight: 400; text-align: left; color: #4c607a; white-space: nowrap; overflow: hidden; }
th:first-child { padding-left: 16px; border-left: 0; }
th.h-name { padding-left: 2px; border-left: 0; }
tbody::before { content: ""; display: block; height: 8px; }
td { height: 27px; padding: 0 0 0 8px; color: #6d6d6d; white-space: nowrap; overflow: hidden; }
td:first-child { padding-left: 25px; }
td.date { font-size: 16px; }
td.name { padding-left: 0; color: #000; }
td.name svg { display: inline-block; vertical-align: middle; margin-right: 4px; }
.selected td { background: #d9d9d9; }
.selected td:first-child { background: linear-gradient(90deg, #fff 20px, #d9d9d9 20px); }
.focused td { background: linear-gradient(#99d1ff, #99d1ff) 0 0 / 100% 1px no-repeat, linear-gradient(#99d1ff, #99d1ff) 0 100% / 100% 1px no-repeat; }
.focused td:first-child { background: linear-gradient(#99d1ff, #99d1ff) 20px 0 / 100% 1px no-repeat, linear-gradient(#99d1ff, #99d1ff) 20px 100% / 100% 1px no-repeat, linear-gradient(#99d1ff, #99d1ff) 20px 0 / 1px 100% no-repeat; }

input[type="checkbox"] { appearance: none; display: block; width: 16px; height: 16px; border: 1px solid #333; background: #fff; }
input[type="checkbox"]:checked::before { content: ""; display: block; width: 10px; height: 5px; margin: 3px 2px; border: solid #333; border-width: 0 0 1px 1px; transform: rotate(-45deg); }

.hscroll { display: flex; align-items: center; flex: none; gap: 7px; height: 20px; margin: auto 0 0 2px; padding: 0 6px; background: #f0f0f0; color: #555; }
.track { flex: 1; height: 20px; }
.hthumb { display: block; width: 87%; height: 19px; background: #cdcdcd; }

/* Status bar */
.status { display: flex; align-items: center; flex: none; height: 29px; padding-left: 17px; color: #1e395b; }
.status span { margin: 0 12px 2px 0; padding-right: 13px; border-right: 1px solid #f0f0f0; }
.views { display: flex; margin-left: auto; padding-right: 5px; }
.views button { display: grid; place-items: center; width: 28px; height: 29px; }
.views .on { background: #cce8f6; border: 1px solid #26a0da; }

/* Network and load meters showing below the window */
.meters { grid-area: 3 / 2; display: flex; justify-content: flex-end; height: 8px; overflow: hidden; font: 13px/13px "Liberation Sans", sans-serif; color: #1b1b1b; background: linear-gradient(90deg, #8a5010, #84490f 50%, #120a05 55%, #2a1608 62%, #0c0705 68%, #120a05 73%, #7a6448 76%); }
.meters span { text-align: center; margin-top: -8px; height: 16px; }
.m-cpu { width: 40px; background: #2b8aa5; border-bottom: 4px solid #7aae3c; }
.m-mem { width: 40px; background: #7aae3c; }
.m-up { width: 75px; background: #e07f16; }
.m-down { width: 55px; background: #4ca0b8; }

/* Drawn marks over the windows */
.marks { position: absolute; inset: 0; width: 100%; height: 100%; z-index: 4; pointer-events: none; filter: drop-shadow(2px 4px 3px rgba(0, 0, 0, .65)); }
.ink { fill: none; stroke: #f00; stroke-width: 3; }
.heads { fill: #f00; }
.watermark { position: absolute; right: 9px; bottom: 8px; z-index: 5; margin: 0; font: 16px/20px "Liberation Sans", sans-serif; color: rgba(205, 205, 205, .8); }
```
